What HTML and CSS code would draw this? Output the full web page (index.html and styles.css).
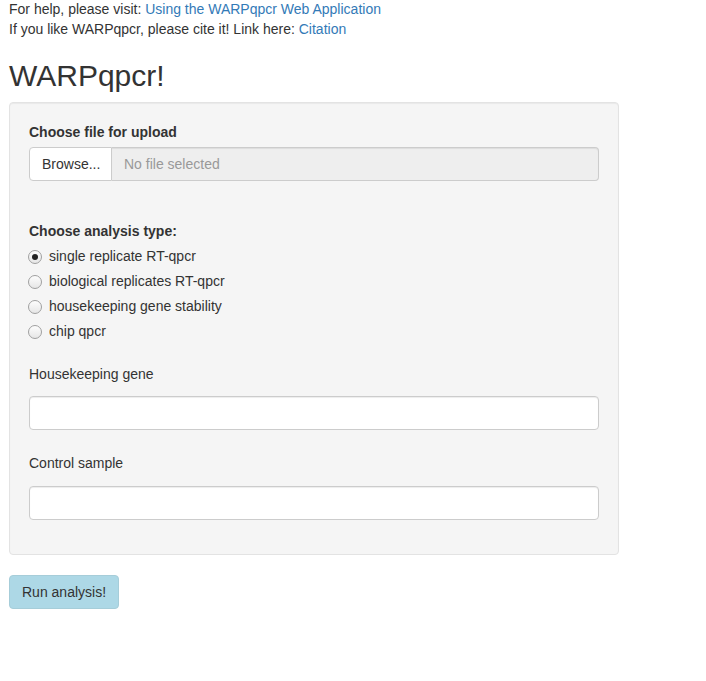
FILE: index.html
```html
<!DOCTYPE html>
<html>
<head>
<meta charset="utf-8">
<title>WARPqpcr!</title>
<link rel="stylesheet" href="styles.css">
</head>
<body>
<div class="page">
  <div class="intro">
    <div>For help, please visit: <a href="#">Using the WARPqpcr Web Application</a></div>
    <div>If you like WARPqpcr, please cite it! Link here: <a href="#">Citation</a></div>
  </div>
  <h2 class="title">WARPqpcr!</h2>
  <div class="well">
    <div class="group file-group">
      <label class="label-bold">Choose file for upload</label>
      <div class="input-group">
        <span class="browse">Browse...</span>
        <span class="file-name">No file selected</span>
      </div>
    </div>
    <div class="group radio-group">
      <label class="label-bold">Choose analysis type:</label>
      <div class="options">
        <label class="radio"><span class="dot checked"></span>single replicate RT-qpcr</label>
        <label class="radio"><span class="dot"></span>biological replicates RT-qpcr</label>
        <label class="radio"><span class="dot"></span>housekeeping gene stability</label>
        <label class="radio"><span class="dot"></span>chip qpcr</label>
      </div>
    </div>
    <div class="group text-group">
      <label class="label-normal">Housekeeping gene</label>
      <div class="text-input"></div>
    </div>
    <div class="group text-group">
      <label class="label-normal">Control sample</label>
      <div class="text-input"></div>
    </div>
  </div>
  <button class="run">Run analysis!</button>
</div>
</body>
</html>
```
FILE: styles.css
```css
html, body {
  margin: 0;
  padding: 0;
  background: #fff;
}
body {
  font-family: "Liberation Sans", Arial, Helvetica, sans-serif;
  font-size: 14px;
  line-height: 20px;
  color: #333;
}
.page {
  padding: 0 9px;
}
.intro {
  margin-top: -1px;
}
.intro a {
  color: #337ab7;
  text-decoration: none;
}
.title {
  font-family: "Liberation Sans", Arial, sans-serif;
  font-weight: 500;
  font-size: 30px;
  line-height: 33px;
  margin: 20px 0 10px;
  color: #333;
}
.well {
  width: 570px;
  background: #f5f5f5;
  border: 1px solid #e3e3e3;
  border-radius: 4px;
  padding: 19px 19px 34px;
  box-shadow: inset 0 1px 1px rgba(0,0,0,.05);
  display: flex;
  flex-direction: column;
}
.group {
  display: flex;
  flex-direction: column;
}
.label-bold {
  font-weight: bold;
  display: block;
  margin-bottom: 5px;
}
.label-normal {
  display: block;
  margin-bottom: 12px;
}
.text-group + .text-group .label-normal {
  margin-bottom: 13px;
}
.file-group {
  margin-bottom: 40px;
}
.input-group {
  display: flex;
  height: 34px;
}
.browse {
  box-sizing: border-box;
  width: 83px;
  height: 34px;
  padding: 6px 12px;
  background: #fff;
  border: 1px solid #ccc;
  border-radius: 4px 0 0 4px;
  color: #333;
}
.file-name {
  flex: 1;
  box-sizing: border-box;
  height: 34px;
  padding: 6px 12px;
  background: #eee;
  border: 1px solid #ccc;
  border-left: none;
  border-radius: 0 4px 4px 0;
  color: #999;
  box-shadow: inset 0 1px 1px rgba(0,0,0,.075);
}
.options {
  display: flex;
  flex-direction: column;
  gap: 5px;
}
.radio {
  display: flex;
  align-items: flex-start;
  height: 20px;
  cursor: pointer;
}
.dot {
  box-sizing: border-box;
  width: 14px;
  height: 14px;
  margin: 4px 7px 0 -1px;
  border-radius: 50%;
  border: 1px solid #a0a0a0;
  background: linear-gradient(#fdfdfd, #e6e6e6);
  display: flex;
  align-items: center;
  justify-content: center;
  flex-shrink: 0;
}
.dot.checked::after {
  content: "";
  width: 6px;
  height: 6px;
  border-radius: 50%;
  background: #222;
}
.radio-group {
  margin-bottom: 23px;
}
.text-group + .text-group {
  margin-top: 23px;
}
.text-input {
  box-sizing: border-box;
  height: 34px;
  background: #fff;
  border: 1px solid #ccc;
  border-radius: 4px;
  box-shadow: inset 0 1px 1px rgba(0,0,0,.075);
}
.run {
  margin-top: 20px;
  font-family: "Liberation Sans", Arial, sans-serif;
  font-size: 14px;
  line-height: 20px;
  color: #333;
  background: #add8e6;
  border: 1px solid #a6cdd9;
  border-radius: 4px;
  padding: 6px 12px;
  cursor: pointer;
}
```
